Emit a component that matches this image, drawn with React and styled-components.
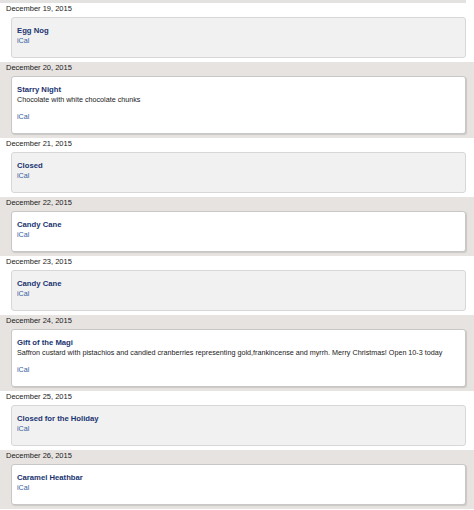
import React from "react";
import styled, { createGlobalStyle } from "styled-components";

const Global = createGlobalStyle`
  html, body { margin: 0; padding: 0; background: #ffffff; }
  body { font-family: "Liberation Sans", Arial, sans-serif; color: #222; }
`;

const Page = styled.div`
  display: flex;
  flex-direction: column;
  width: 474px;
`;

const TopStrip = styled.div`
  height: 3px;
  margin-right: 8px;
  background: #e4e2e0;
`;

const Section = styled.section`
  display: flex;
  flex-direction: column;
  padding-bottom: 4px;
  background: ${(p) => (p.$shaded ? "#e6e3e1" : "#ffffff")};
`;

const DateLabel = styled.div`
  height: 14px;
  line-height: 12px;
  padding-left: 6px;
  font-size: 7.5px;
  color: #1a1a1a;
`;

const Card = styled.div`
  box-sizing: border-box;
  margin: 0 8px 0 11px;
  padding: 8px 6px 11px 5px;
  border: 1px solid ${(p) => (p.$shaded ? "#c9c7c5" : "#d7d7d7")};
  border-radius: 3px;
  background: ${(p) => (p.$shaded ? "#ffffff" : "#f1f1f1")};
  box-shadow: ${(p) => (p.$shaded ? "1px 1px 1px rgba(0,0,0,0.12)" : "none")};
  display: flex;
  flex-direction: column;
`;

const Title = styled.div`
  height: 10px;
  line-height: 10px;
  font-size: 7.7px;
  font-weight: bold;
  color: #1a3470;
`;

const Desc = styled.div`
  height: 10px;
  line-height: 10px;
  margin-bottom: 7px;
  font-size: 7.2px;
  color: #1a1a1a;
  white-space: nowrap;
`;

const Link = styled.a`
  height: 10px;
  line-height: 10px;
  font-size: 7.2px;
  color: #3b5ea0;
  text-decoration: none;
`;

const events = [
  { date: "December 19, 2015", title: "Egg Nog" },
  {
    date: "December 20, 2015",
    title: "Starry Night",
    desc: "Chocolate with white chocolate chunks",
  },
  { date: "December 21, 2015", title: "Closed" },
  { date: "December 22, 2015", title: "Candy Cane" },
  { date: "December 23, 2015", title: "Candy Cane" },
  {
    date: "December 24, 2015",
    title: "Gift of the Magi",
    desc:
      "Saffron custard with pistachios and candied cranberries representing gold,frankincense and myrrh. Merry Christmas! Open 10-3 today",
  },
  { date: "December 25, 2015", title: "Closed for the Holiday" },
  { date: "December 26, 2015", title: "Caramel Heathbar" },
];

export default function App() {
  return (
    <Page>
      <Global />
      <TopStrip />
      {events.map((e, i) => {
        const shaded = i % 2 === 1;
        return (
          <Section key={e.date} $shaded={shaded}>
            <DateLabel>{e.date}</DateLabel>
            <Card $shaded={shaded}>
              <Title>{e.title}</Title>
              {e.desc && <Desc>{e.desc}</Desc>}
              <Link href="#">iCal</Link>
            </Card>
          </Section>
        );
      })}
    </Page>
  );
}
